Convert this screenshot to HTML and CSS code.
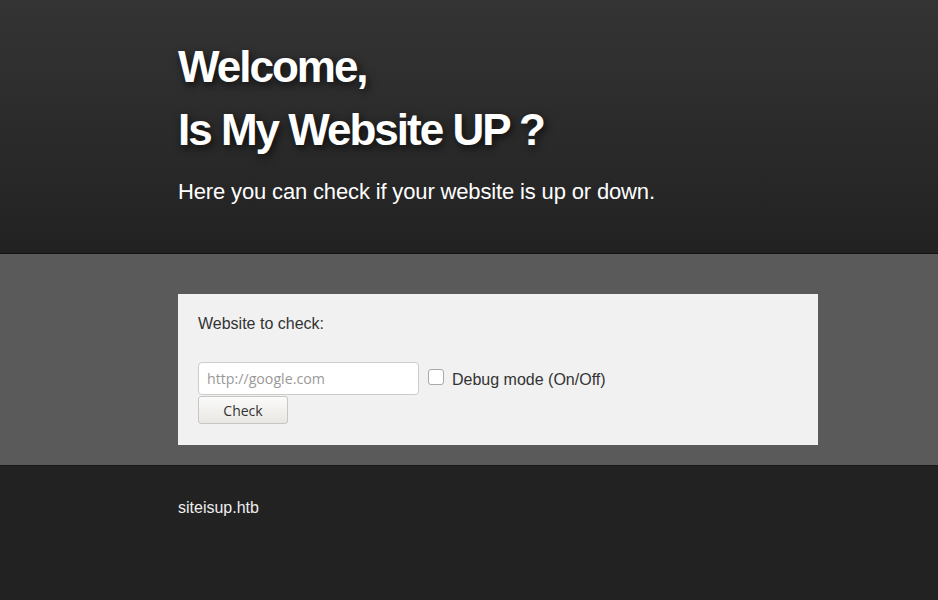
FILE: index.html
```html
<!DOCTYPE html>
<html>
<head>
<meta charset="utf-8">
<title>Is My Website UP ?</title>
<link rel="stylesheet" href="styles.css">
</head>
<body>
<header class="hero">
  <div class="wrap">
    <h1 class="title">Welcome,<br>Is My Website UP ?</h1>
    <p class="lead">Here you can check if your website is up or down.</p>
  </div>
</header>
<main class="band">
  <div class="wrap">
    <form class="card">
      <label class="field-label" for="site">Website to check:</label>
      <div class="row">
        <input class="url" id="site" type="text" placeholder="http://google.com">
        <label class="debug"><input class="check" type="checkbox"><span>Debug mode (On/Off)</span></label>
      </div>
      <button class="btn" type="button">Check</button>
    </form>
  </div>
</main>
<footer class="foot">
  <div class="wrap">
    <p class="brand">siteisup.htb</p>
  </div>
</footer>
</body>
</html>
```
FILE: styles.css
```css
html, body {
  margin: 0;
  padding: 0;
  background: #222;
  font-family: "Liberation Sans", Arial, sans-serif;
}
.wrap {
  width: 640px;
  margin-left: 178px;
}
.hero {
  background: linear-gradient(to bottom, #343434 0%, #222 100%);
  border-bottom: 1px solid #111;
  padding: 35px 0 46px;
  color: #fff;
}
.title {
  margin: 0;
  font-size: 44px;
  line-height: 63px;
  font-weight: bold;
  letter-spacing: -2px;
  text-shadow: 2px 3px 8px rgba(0,0,0,0.75);
}
.lead {
  margin: 16px 0 0;
  font-size: 22px;
  line-height: 30px;
  letter-spacing: -0.15px;
}
.band {
  display: block;
  background: #5b5a5a;
  padding: 40px 0 20px;
  border-bottom: 1px solid #1a1a1a;
}
.card {
  background: #f1f1f1;
  padding: 20px 20px 21px;
  display: flex;
  flex-direction: column;
  align-items: flex-start;
}
.field-label {
  font-size: 16px;
  line-height: 20px;
  color: #333;
}
.row {
  display: flex;
  align-items: center;
  margin-top: 28px;
}
.url {
  box-sizing: border-box;
  width: 221px;
  height: 33px;
  border: 1px solid #ccc;
  border-radius: 4px;
  background: #fff;
  padding: 0 8px;
  font-family: "Open Sans", sans-serif;
  font-size: 14.2px;
  color: #333;
  outline: none;
}
.url::placeholder {
  color: #999;
}
.debug {
  display: flex;
  align-items: center;
  margin-left: 9px;
  margin-top: -3px;
  font-size: 16px;
  color: #333;
}
.check {
  appearance: none;
  -webkit-appearance: none;
  box-sizing: border-box;
  width: 16px;
  height: 16px;
  margin: 0 8px 0 0;
  border: 1px solid #a8a8a8;
  border-radius: 3px;
  background: #fff;
}
.debug span {
  position: relative;
  top: 3px;
}
.btn {
  box-sizing: border-box;
  margin-top: 1px;
  width: 90px;
  height: 28px;
  border: 1px solid #c8c6c2;
  border-radius: 3px;
  background: linear-gradient(to bottom, #fbfbfa 0%, #e9e7e3 100%);
  font-family: "Open Sans", sans-serif;
  font-size: 14px;
  color: #333;
  padding: 0;
}
.foot {
  display: block;
  background: #222;
  padding: 33px 0 60px;
}
.brand {
  margin: 0;
  font-size: 16px;
  line-height: 18px;
  color: #eee;
}
```
